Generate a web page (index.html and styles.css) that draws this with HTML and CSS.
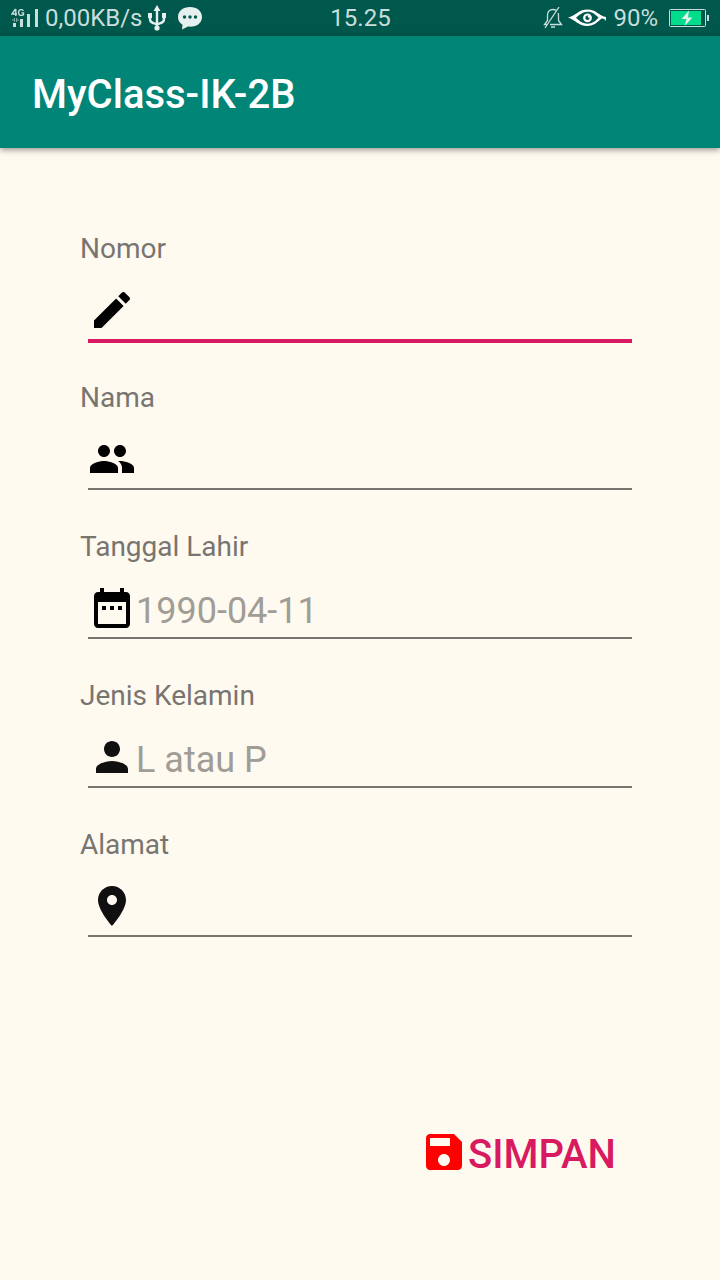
FILE: index.html
```html
<!DOCTYPE html>
<html lang="id">
<head>
<meta charset="utf-8">
<meta name="viewport" content="width=device-width, initial-scale=1">
<title>MyClass-IK-2B</title>
<link rel="stylesheet" href="styles.css">
</head>
<body>
<div class="status-bar">
  <div class="status-left">
    <svg class="signal" width="28" height="20" viewBox="0 0 28 20" fill="currentColor" aria-hidden="true">
      <path d="M4.500 1 1 6h5M4.800 1v7M12.500 2.800Q11.500 1.600 10 1.600 7.600 1.600 7.600 4.500T10 7.400Q11.500 7.400 12.500 6.600V4.900H10.500" fill="none" stroke="currentColor" stroke-width="1.400"/>
      <path d="M2 15h3v4H2zM9 11h3v8H9zM16 6h3v13h-3zM24 1h3v18h-3z"/>
      <path d="M1 12h2M3.500 10v4M5.500 10v4M6 12h2" fill="none" stroke="currentColor" stroke-width="1" opacity=".6"/>
    </svg>
    <span>0,00KB/s</span>
    <svg class="usb" width="20" height="26" viewBox="0 0 20 26" aria-hidden="true">
      <g fill="none" stroke="#e6f0ee" stroke-width="2.400">
        <path d="M10 4v19M3 11v3q0 3 3 4l4 1.500 4-1.500q3-1 3-4v-3"/>
      </g>
      <path d="M10 0l3.500 6h-7zM1 8h4v5H1zM15 8h4v5h-4z" fill="#e6f0ee"/>
      <circle cx="10" cy="23" r="2.600" fill="#e6f0ee"/>
    </svg>
    <svg class="chat" width="26" height="24" viewBox="0 0 26 24" aria-hidden="true">
      <path d="M13 1C6 1 1 5 1 11c0 3.500 1.500 6 4.500 7.800L5 23.500l6-3c8 1 14-3 14-9.500C25 5 20 1 13 1z" fill="#e6f0ee"/>
      <g fill="#00574b"><circle cx="7.500" cy="11" r="1.700"/><circle cx="13" cy="11" r="1.700"/><circle cx="18.500" cy="11" r="1.700"/></g>
    </svg>
  </div>
  <time class="clock">15.25</time>
  <div class="status-right">
    <svg width="20" height="22" viewBox="0 0 20 22" fill="none" stroke="currentColor" stroke-width="1.300" aria-hidden="true">
      <path d="M4 17.500H1.500l3-4V8c0-3.500 2-5.500 5.500-5.500 1 0 2 .2 3 .7M15 6c.5 1 .5 1.500.5 2.500v5l3 4H7M8 20h4M16 0 2 21"/>
    </svg>
    <svg class="eye" width="42" height="20" viewBox="0 0 42 20" aria-hidden="true">
      <path fill-rule="evenodd" fill="#fff" d="M1 9.500C8 8.500 11 1.500 20.500 1.500c8.500 0 12 6.500 18.500 7.500v4c-2-2.500-3.500-3-5-2-3.500 3-7 7-13.500 7C11 18 8 11.500 1 9.500zM9 9.800C12 12.500 15 15.700 20.500 15.700c5 0 8.500-3.200 11-6C28.500 6.500 25.500 3.800 20.500 3.800 15.500 3.800 12 7.500 9 9.800z"/>
      <circle cx="20.500" cy="9.800" r="3.300" fill="none" stroke="#fff" stroke-width="2.200"/>
      <circle cx="22" cy="8.500" r="1.200" fill="#fff"/>
    </svg>
    <span>90%</span>
    <svg class="battery" width="42" height="20" viewBox="0 0 42 20" aria-hidden="true">
      <rect x="1.500" y="1.500" width="36" height="17" rx="1" fill="none" stroke="#c9dedb"/>
      <rect x="3" y="3" width="30" height="14" fill="#00dc8c"/>
      <rect x="39" y="7" width="2" height="6" fill="#c9dedb"/>
      <path d="M21 2.500 13.500 11h5L16.500 18l8-8.500H20z" fill="#e6f0ee"/>
    </svg>
  </div>
</div>
<header class="app-bar"><h1 class="title">MyClass-IK-2B</h1></header>
<main>
  <form class="form">
    <div class="group">
      <label class="label" for="nomor">Nomor</label>
      <div class="field field-active">
        <svg class="icon" viewBox="0 0 24 24" aria-hidden="true"><path d="M3 17.250V21h3.750L17.810 9.940l-3.750-3.750L3 17.250zM20.710 7.040c.39-.39.39-1.020 0-1.410l-2.340-2.340c-.39-.39-1.020-.39-1.410 0l-1.830 1.830 3.750 3.750 1.830-1.830z"/></svg>
        <input class="input" id="nomor" type="text">
      </div>
    </div>
    <div class="group">
      <label class="label" for="nama">Nama</label>
      <div class="field">
        <svg class="icon" viewBox="0 0 24 24" aria-hidden="true"><path d="M16 11c1.660 0 2.990-1.340 2.990-3S17.660 5 16 5s-3 1.340-3 3 1.340 3 3 3zm-8 0c1.660 0 2.990-1.340 2.990-3S9.660 5 8 5 5 6.340 5 8s1.340 3 3 3zm0 2c-2.330 0-7 1.170-7 3.500V19h14v-2.500c0-2.330-4.670-3.500-7-3.500zm8 0c-.29 0-.62.020-.97.050 1.160.84 1.970 1.970 1.970 3.450V19h6v-2.500c0-2.330-4.670-3.500-7-3.500z"/></svg>
        <input class="input" id="nama" type="text">
      </div>
    </div>
    <div class="group">
      <label class="label" for="tanggal">Tanggal Lahir</label>
      <div class="field">
        <svg class="icon" viewBox="0 0 24 24" aria-hidden="true"><path d="M9 11H7v2h2v-2zm4 0h-2v2h2v-2zm4 0h-2v2h2v-2zm2-7h-1V2h-2v2H8V2H6v2H5c-1.110 0-1.990.9-1.990 2L3 20c0 1.100.89 2 2 2h14c1.100 0 2-.9 2-2V6c0-1.100-.9-2-2-2zm0 16H5V9h14v11z"/></svg>
        <input class="input" id="tanggal" type="text" placeholder="1990-04-11">
      </div>
    </div>
    <div class="group">
      <label class="label" for="kelamin">Jenis Kelamin</label>
      <div class="field">
        <svg class="icon icon-soft" viewBox="0 0 24 24" aria-hidden="true"><path d="M12 12c2.210 0 4-1.790 4-4s-1.790-4-4-4-4 1.790-4 4 1.790 4 4 4zm0 2c-2.670 0-8 1.340-8 4v2h16v-2c0-2.660-5.330-4-8-4z"/></svg>
        <input class="input" id="kelamin" type="text" placeholder="L atau P">
      </div>
    </div>
    <div class="group">
      <label class="label" for="alamat">Alamat</label>
      <div class="field">
        <svg class="icon icon-soft" viewBox="0 0 24 24" aria-hidden="true"><path d="M12 2C8.130 2 5 5.130 5 9c0 5.250 7 13 7 13s7-7.750 7-13c0-3.870-3.130-7-7-7zm0 9.500c-1.380 0-2.500-1.120-2.500-2.500s1.120-2.500 2.500-2.500 2.500 1.120 2.500 2.500-1.120 2.500-2.500 2.500z"/></svg>
        <input class="input" id="alamat" type="text">
      </div>
    </div>
    <button class="save" type="button">
      <svg class="icon icon-save" viewBox="0 0 24 24" aria-hidden="true"><path d="M17 3H5c-1.110 0-2 .9-2 2v14c0 1.100.89 2 2 2h14c1.100 0 2-.9 2-2V7l-4-4zm-5 16c-1.660 0-3-1.340-3-3s1.340-3 3-3 3 1.340 3 3-1.340 3-3 3zm3-10H5V5h10v4z"/></svg>
      <span class="save-text">SIMPAN</span>
    </button>
  </form>
</main>
</body>
</html>
```
FILE: styles.css
```css
* {
  box-sizing: border-box;
}

body {
  margin: 0;
  min-height: 100vh;
  background: #fffaf0;
  font-family: Roboto, "Liberation Sans", sans-serif;
}

svg {
  display: block;
  flex: none;
}

.status-bar {
  display: grid;
  grid-template-columns: 1fr auto 1fr;
  align-items: center;
  height: 36px;
  padding: 0 10px 0 11px;
  background: #00574b;
  color: #c9dedb;
  font-size: 24px;
  line-height: 36px;
}

.status-left,
.status-right {
  display: flex;
  align-items: center;
}

.status-right {
  justify-content: flex-end;
}

.signal {
  margin-right: 6px;
}

.usb {
  margin-left: 4px;
}

.chat {
  margin-left: 10px;
}

.eye {
  margin: 0 4px;
}

.battery {
  margin-left: 10px;
}

.app-bar {
  padding: 35px 32px 29px;
  background: #008577;
  box-shadow: 0 2px 6px rgba(0, 0, 0, 0.4);
}

.title {
  margin: 0;
  color: #fff;
  font-size: 40px;
  font-weight: 500;
  line-height: 48px;
}

.form {
  display: flex;
  flex-direction: column;
  gap: 36px;
  padding: 82px 80px 80px;
}

.group {
  display: flex;
  flex-direction: column;
  gap: 18px;
}

.label {
  color: #787570;
  font-size: 28px;
  line-height: 38px;
}

.field {
  display: flex;
  margin: 0 8px 2px;
  padding-bottom: 5px;
  border-bottom: 2px solid #787570;
}

.field-active {
  margin-bottom: 0;
  border-bottom: 4px solid #d81b60;
}

.icon {
  width: 48px;
  height: 48px;
  fill: #000;
}

.icon-soft {
  fill: #101010;
}

.icon-save {
  fill: #f00;
}

.input {
  flex: 1;
  min-width: 0;
  height: 48px;
  padding: 6px 0 0;
  border: 0;
  outline: 0;
  background: transparent;
  color: #212121;
  font: inherit;
  font-size: 36px;
}

.input::placeholder {
  color: #a09d97;
  opacity: 1;
}

.save {
  display: flex;
  align-items: flex-start;
  align-self: flex-end;
  margin: 129px 0 0;
  padding: 24px;
  border: 0;
  background: transparent;
  color: #d81b60;
  font: inherit;
  font-size: 40px;
  font-weight: 500;
  line-height: 48px;
}

.save-text {
  padding-top: 3px;
}
```
